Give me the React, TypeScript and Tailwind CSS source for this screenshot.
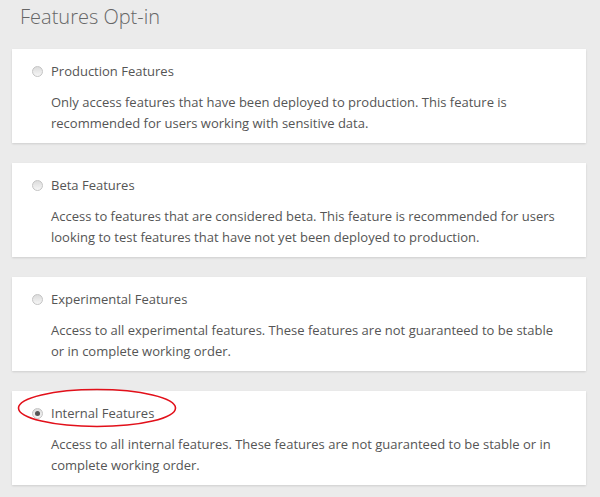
const features = [
  {
    id: 'production',
    label: 'Production Features',
    text: 'Only access features that have been deployed to production. This feature is recommended for users working with sensitive data.',
  },
  {
    id: 'beta',
    label: 'Beta Features',
    text: 'Access to features that are considered beta. This feature is recommended for users looking to test features that have not yet been deployed to production.',
  },
  {
    id: 'experimental',
    label: 'Experimental Features',
    text: 'Access to all experimental features. These features are not guaranteed to be stable or in complete working order.',
  },
  {
    id: 'internal',
    label: 'Internal Features',
    text: 'Access to all internal features. These features are not guaranteed to be stable or in complete working order.',
  },
];

function Radio({ checked }: { checked: boolean }) {
  return (
    <span className="flex h-[11px] w-[11px] shrink-0 items-center justify-center rounded-full border border-[#c4c4c4] bg-gradient-to-b from-[#dcdcdc] to-[#f6f6f6]">
      {checked && <span className="h-[5px] w-[5px] rounded-full bg-[#555]"></span>}
    </span>
  );
}

export default function App() {
  const selected = 'internal';

  return (
    <div className="min-h-[497px] bg-[#ebebeb] pl-[12px] pr-[14px] pt-[3px] font-['Open_Sans',sans-serif] text-[#555]">
      <h2 className="mb-[18px] ml-[8px] text-[20px] font-light leading-[28px] text-[#666]">Features Opt-in</h2>

      <div className="flex flex-col gap-[20px]">
        {features.map((f) => (
          <div key={f.id} className="relative bg-white pb-[9px] pl-[20px] pr-[20px] pt-[12px] shadow-[0_1px_2px_rgba(0,0,0,0.12)]">
            <label className="flex items-center gap-[8px] text-[13px] leading-[21px]">
              <Radio checked={f.id === selected} />
              <span>{f.label}</span>
            </label>
            <p className="mt-[10px] pl-[19px] text-[13px] leading-[21px]">{f.text}</p>

            {/* annotation around the active option */}
            {f.id === selected && (
              <svg className="pointer-events-none absolute left-[5px] top-[-3px]" width="160" height="40" viewBox="0 0 160 40">
                <ellipse cx="80" cy="20" rx="78.5" ry="18.5" fill="none" stroke="#e2101a" strokeWidth="1.6" />
              </svg>
            )}
          </div>
        ))}
      </div>
    </div>
  );
}
